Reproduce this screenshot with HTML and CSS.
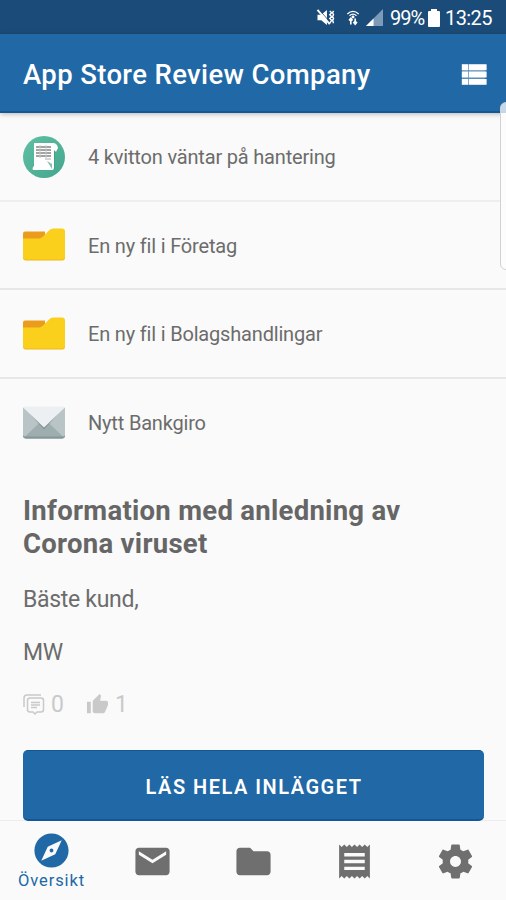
FILE: index.html
```html
<!DOCTYPE html>
<html lang="sv">
<head>
<meta charset="utf-8">
<title>App Store Review Company</title>
<link rel="stylesheet" href="styles.css">
</head>
<body>
<div class="app">
  <div class="status">
    <svg class="s-mute" viewBox="0 0 20 18" width="20" height="17"><path fill="#fff" d="M1 6h4l6-5v16l-6-5H1z"/><path d="M3 1l12 14" stroke="#1b4c79" stroke-width="1"/><path d="M1 1l13 15" stroke="#fff" stroke-width="2"/><path d="M14 2l2 2-2 2 2 2-2 2 2 2-2 3M18 2l-1 2 1 2-1 2 1 2-1 2 1 3" fill="none" stroke="#fff" stroke-width="1.5"/></svg>
    <svg class="s-wifi" viewBox="0 0 16 18" width="14" height="17"><g fill="none" stroke="#fff"><path d="M1.500 5Q8-1 14.500 5" stroke-width="1.500"/><path d="M4 7q4-3.500 8 0" stroke-width="1.400"/><path d="M5.500 10v7M10.500 10v7M3.500 12.500l2-2.500 2 2.500M8.500 14l2 2.500 2-2.500" stroke-width="1.900"/></g><circle cx="8" cy="8.500" r="1.700" fill="#fff"/></svg>
    <svg class="s-cell" viewBox="0 0 18 18" width="17" height="17"><path fill="#7b9bb8" d="M18 0v18H0z"/><path fill="#fff" d="M8 10v8H0z"/></svg>
    <span class="s-pct">99%</span>
    <svg class="s-batt" viewBox="0 0 12 18" width="12" height="18"><path fill="#fff" d="M3 0h6v2h2q1 0 1 1v14q0 1-1 1H1q-1 0-1-1V3q0-1 1-1h2z"/></svg>
    <span class="s-time">13:25</span>
  </div>
  <header class="bar">
    <h1>App Store Review Company</h1>
    <svg viewBox="0 0 24 24" width="35" height="35"><path fill="#c3d3ec" d="M4 5h16v14H4z" opacity=".35"/><path fill="#fff" d="M4 14h4.300v-4H4v4zm0 5h4.300v-4H4v4zM4 9h4.300V5H4v4zm4.800 5H21v-4H8.800v4zm0 5H21v-4H8.800v4zm0-14v4H21V5H8.800z"/></svg>
    <div class="edge"></div>
  </header>
  <main>
    <ul class="list">
      <li>
        <svg viewBox="0 0 42 42" width="42" height="42"><defs><linearGradient id="g" x1="0" y1="0" x2="1" y2="1"><stop offset="0" stop-color="#60c0a5"/><stop offset="1" stop-color="#43a68c"/></linearGradient></defs><circle cx="21" cy="21" r="21" fill="url(#g)"/><path fill="#398f79" d="M30 10l5 4-3 3v16l-18 2 14-4z" opacity=".4"/><path fill="#fff" d="M11 7h19q4 0 5 5l-2 4-2-2v18q0 2-2 2H10q-1-1 0-3l1-1z"/><path fill="#398f79" d="M24 25l5 3v5z" opacity=".6"/><path d="M13 11h15M13 14h15M13 17h15M13 20h15" stroke="#a3a3a3" stroke-width="2"/><path d="M17 9v13M23 9v13" stroke="#c8c8c8"/><path d="M22 23h6" stroke="#aaa"/></svg>
        <span>4 kvitton väntar på hantering</span>
      </li>
      <li>
        <svg viewBox="0 -2.5 42 42" width="42" height="42"><path fill="#eb9c1d" d="M0 7q0-2 2-2h20v10H0z"/><path fill="#f1b716" d="M0 14v17q0 3 3 3h36q3 0 3-3V10z"/><path fill="#fbd01d" d="M0 12h16q2 0 4-2l6-6q2-2 4-2h9q3 0 3 3v25q0 3-3 3H3q-3 0-3-3z"/></svg>
        <span>En ny fil i Företag</span>
      </li>
      <li>
        <svg viewBox="0 -2.5 42 42" width="42" height="42"><path fill="#eb9c1d" d="M0 7q0-2 2-2h20v10H0z"/><path fill="#f1b716" d="M0 14v17q0 3 3 3h36q3 0 3-3V10z"/><path fill="#fbd01d" d="M0 12h16q2 0 4-2l6-6q2-2 4-2h9q3 0 3 3v25q0 3-3 3H3q-3 0-3-3z"/></svg>
        <span>En ny fil i Bolagshandlingar</span>
      </li>
      <li>
        <svg viewBox="0 .5 42 42" width="42" height="42"><path fill="#b9c4c6" d="M0 6h42v28q0 3-3 3H3q-3 0-3-3z"/><path fill="#9eadae" d="M1 36l20-19 20 19-2 1H3z"/><path fill="#84979a" d="M0 33q0 2 3 2h36q3 0 3-2v1q0 3-3 3H3q-3 0-3-3z"/><path fill="#82949a" d="M2 7l19 21L40 7z"/><path fill="#ecf0f2" d="M0 6q1-1 2-1h38q1 0 2 1L21 26z"/></svg>
        <span>Nytt Bankgiro</span>
      </li>
    </ul>
    <article>
      <h2>Information med anledning av<br>Corona viruset</h2>
      <p class="p1">Bäste kund,</p>
      <p class="p2">MW</p>
      <div class="meta">
        <svg viewBox="0 0 22 22" width="22" height="22"><g fill="none" stroke="#c9c9c9" stroke-width="1.500"><path d="M1 13V4q0-3 3-3h14"/><path d="M7 4h11q2.500 0 2.500 2.500v9q0 2.500-2.500 2.500h-4l-2 2-2-2H7q-2.500 0-2.500-2.500v-9Q4.500 4 7 4z"/><path d="M8 8.500h9M8 11h9M8 13.500h6"/></g></svg>
        <span class="n0">0</span>
        <svg class="thumb" viewBox="0 0 24 24" width="23" height="23"><path fill="#c9c9c9" d="M1 21h4V9H1v12zm22-11c0-1.100-.9-2-2-2h-6.310l.95-4.570.03-.32c0-.41-.17-.79-.44-1.060L14.170 1 7.590 7.590C7.220 7.950 7 8.450 7 9v10c0 1.100.9 2 2 2h9c.83 0 1.540-.5 1.840-1.220l3.020-7.050c.09-.23.14-.47.14-.73v-2z"/></svg>
        <span class="n1">1</span>
      </div>
      <button>LÄS HELA INLÄGGET</button>
    </article>
  </main>
  <nav>
    <a class="on"><svg viewBox="0 0 24 24" width="41" height="41"><path fill="currentColor" d="M12 10.900c-.61 0-1.100.49-1.100 1.100s.49 1.100 1.100 1.100c.61 0 1.100-.49 1.100-1.100s-.49-1.100-1.100-1.100zM12 2C6.480 2 2 6.480 2 12s4.480 10 10 10 10-4.480 10-10S17.520 2 12 2zm2.190 12.190L6 18l3.810-8.190L18 6l-3.810 8.190z"/></svg><span>Översikt</span></a>
    <a><svg viewBox="0 0 24 24" width="41" height="41"><path fill="currentColor" d="M20 4H4c-1.100 0-1.990.9-1.990 2L2 18c0 1.100.9 2 2 2h16c1.100 0 2-.9 2-2V6c0-1.100-.9-2-2-2zm0 4l-8 5-8-5V6l8 5 8-5v2z"/></svg></a>
    <a><svg viewBox="0 0 24 24" width="41" height="41"><path fill="currentColor" d="M10 4H4c-1.100 0-1.990.9-1.990 2L2 18c0 1.100.9 2 2 2h16c1.100 0 2-.9 2-2V8c0-1.100-.9-2-2-2h-8l-2-2z"/></svg></a>
    <a><svg viewBox="0 0 24 24" width="41" height="41"><path fill="currentColor" d="M18 17H6v-2h12v2zm0-4H6v-2h12v2zm0-4H6V7h12v2zM3 22l1.500-1.500L6 22l1.500-1.500L9 22l1.500-1.500L12 22l1.500-1.500L15 22l1.500-1.500L18 22l1.500-1.500L21 22V2l-1.500 1.500L18 2l-1.500 1.500L15 2l-1.500 1.500L12 2l-1.500 1.500L9 2 7.500 3.500 6 2 4.500 3.500 3 2v20z"/></svg></a>
    <a><svg viewBox="0 0 24 24" width="41" height="41"><path fill="currentColor" d="M19.430 12.980c.04-.32.07-.64.07-.98s-.03-.66-.07-.98l2.110-1.650c.19-.15.24-.42.12-.64l-2-3.460c-.12-.22-.39-.3-.61-.22l-2.490 1c-.52-.4-1.080-.73-1.690-.98l-.38-2.650C14.460 2.180 14.250 2 14 2h-4c-.25 0-.46.18-.49.42l-.38 2.650c-.61.25-1.170.59-1.690.98l-2.490-1c-.23-.09-.49 0-.61.22l-2 3.460c-.13.22-.07.49.12.64l2.110 1.650c-.04.32-.07.65-.07.98s.03.66.07.98l-2.110 1.650c-.19.15-.24.42-.12.64l2 3.460c.12.22.39.3.61.22l2.490-1c.52.4 1.080.73 1.690.98l.38 2.650c.03.24.24.42.49.42h4c.25 0 .46-.18.49-.42l.38-2.650c.61-.25 1.170-.59 1.690-.98l2.490 1c.23.09.49 0 .61-.22l2-3.460c.12-.22.07-.49-.12-.64l-2.110-1.650zM12 15.200c-1.770 0-3.200-1.430-3.200-3.200s1.430-3.200 3.200-3.200 3.200 1.430 3.200 3.200-1.430 3.200-3.200 3.200z"/></svg></a>
  </nav>
</div>
</body>
</html>
```
FILE: styles.css
```css
* { box-sizing: border-box; margin: 0; padding: 0; }
body { font-family: Roboto, "Liberation Sans", sans-serif; background: #fafafa; color: #6c6c6c; }
svg { display: block; flex: none; }
span { white-space: nowrap; }
.app { width: 506px; height: 900px; overflow: hidden; display: flex; flex-direction: column; }
.status { height: 34px; flex: none; background: #1b4c79; color: #fff; display: flex; align-items: center; padding: 1px 0 0 316px; font-size: 20px; }
.s-wifi { margin-left: 10px; }
.s-cell { margin-left: 6px; }
.s-pct { width: 34px; margin-left: 7px; letter-spacing: -1px; }
.s-batt { margin-left: 4px; }
.s-time { margin-left: 5px; letter-spacing: -.6px; }
.bar { position: relative; z-index: 1; height: 79px; flex: none; background: #2168a6; border-bottom: 2px solid #145796; box-shadow: 0 1px 5px rgba(0,0,0,.28); display: flex; align-items: center; justify-content: space-between; padding: 3px 15px 0 23px; }
h1 { padding-top: 1px; font-size: 27.500px; font-weight: 500; letter-spacing: .36px; color: #fff; white-space: nowrap; }
.edge { position: absolute; left: 500px; top: 68px; width: 12px; height: 168px; border: 1px solid #d0d3d5; border-radius: 6px; background: linear-gradient(rgba(255,255,255,.75) 10px, #fcfcfc 10px); }
.list { list-style: none; }
.list li { height: 88.500px; display: flex; align-items: center; gap: 23px; padding: 1px 0 0 23px; font-size: 20px; letter-spacing: -.18px; border-bottom: 2px solid #e7e7e7; }
.list li:first-child { border-color: #eee; }
.list li span { padding-top: 1px; }
.list li:last-child { height: 87px; border-bottom: 0; }
main { flex: none; height: 708px; background: linear-gradient(#ececec, #ececec) bottom / 100% 1px no-repeat; }
article { padding: 28px 22px 0 23px; }
h2 { font-size: 27.500px; line-height: 33px; font-weight: 700; letter-spacing: .28px; color: #666; white-space: nowrap; }
.p1, .p2 { font-size: 23px; line-height: 30px; letter-spacing: -.3px; }
.p1 { margin-top: 25px; }
.p2 { margin-top: 23px; }
.meta { margin-top: 24px; height: 26px; display: flex; align-items: center; color: #c9c9c9; font-size: 23px; }
.n0 { margin-left: 6px; }
.thumb { margin-left: 22px; }
.n1 { margin-left: 6px; }
button { display: block; width: 461px; height: 71px; margin-top: 32px; padding: 4px 0 0 1px; border: 0; border-top: 1px solid #145796; border-bottom: 2px solid #145796; border-radius: 5px; background: #2168a6; color: #fff; font: 600 20px Roboto, sans-serif; letter-spacing: 1.500px; }
nav { flex: none; height: 79px; display: grid; grid-template-columns: repeat(5, 1fr); padding-left: 1px; color: #6f6f6f; background: #fafafa; }
nav a { display: flex; flex-direction: column; align-items: center; padding-top: 20px; }
nav .on { padding-top: 9px; color: #2168a6; font-size: 16.500px; }
nav .on span { line-height: 20px; letter-spacing: .9px; }
```
